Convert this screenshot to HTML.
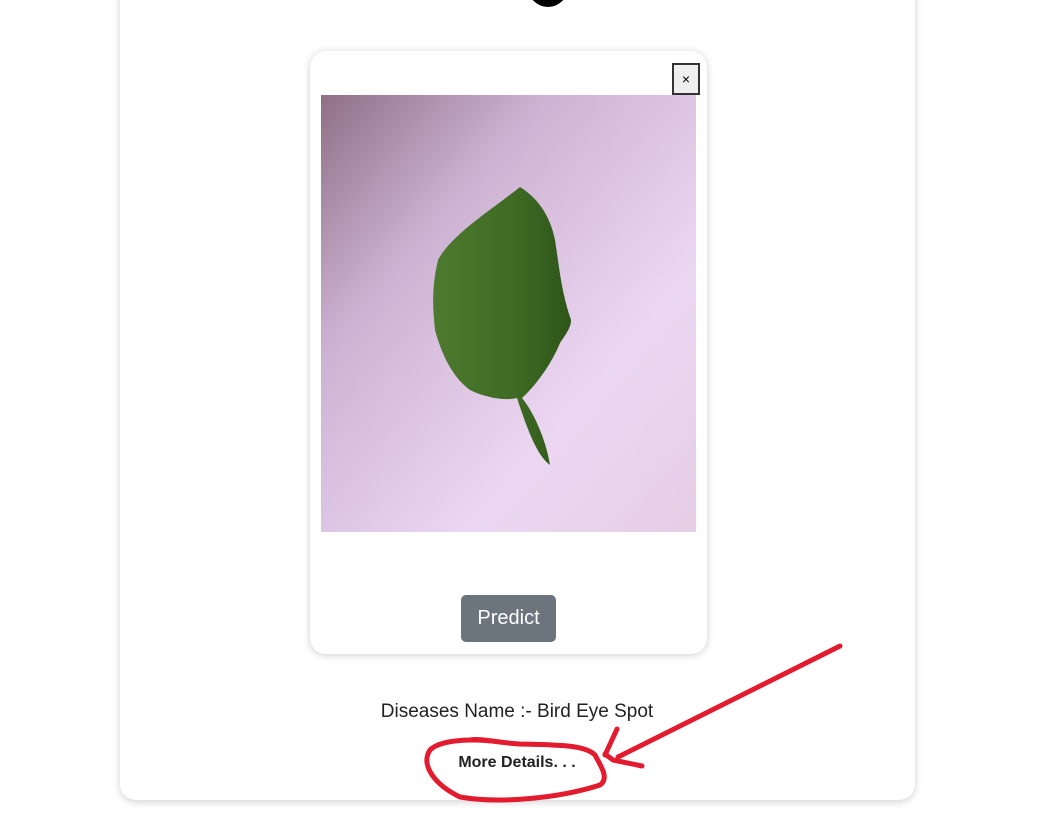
<!DOCTYPE html>
<html><head><style>
body{margin:0;width:1047px;height:817px;background:#fff;position:relative;overflow:hidden;font-family:"Liberation Sans",sans-serif}
.outer{position:absolute;left:120px;top:-40px;width:795px;height:840px;background:#fff;border-radius:16px;box-shadow:0 2px 8px rgba(0,0,0,.18)}
.dot{position:absolute;left:528px;top:-33px;width:40px;height:40px;border-radius:50%;background:#000}
.inner{position:absolute;left:310px;top:51px;width:397px;height:603px;background:#fff;border-radius:16px;box-shadow:0 1px 8px rgba(0,0,0,.2)}
.close{position:absolute;left:672px;top:63px;width:24px;height:28px;border:2px solid #333;background:#efefef;font-size:14px;text-align:center;line-height:28px}
.btn{position:absolute;left:461px;top:595px;width:95px;height:47px;background:#6c757d;border-radius:5px;color:#fff;font-size:20px;text-align:center;line-height:47px}
.t1{position:absolute;left:0;width:1034px;top:701px;text-align:center;font-size:19px;color:#222}
.t2{position:absolute;left:0;width:1034px;top:754px;text-align:center;font-size:16px;font-weight:bold;color:#222}
</style></head><body>
<div class="outer"></div>
<div class="dot"></div>
<div class="inner"></div>
<div class="close">×</div>
<svg style="position:absolute;left:321px;top:95px" width="375" height="437">
<defs><linearGradient id="g" x1="0" y1="0" x2="1" y2="1"><stop offset="0" stop-color="#8e6f86"/><stop offset=".3" stop-color="#cdb3d3"/><stop offset=".7" stop-color="#ecd7f2"/><stop offset="1" stop-color="#e6cde6"/></linearGradient>
<linearGradient id="l" x1="0" y1="0" x2="1" y2="0"><stop offset="0" stop-color="#4d7a2e"/><stop offset=".6" stop-color="#3e6a24"/><stop offset="1" stop-color="#2e5518"/></linearGradient></defs>
<rect width="375" height="437" fill="url(#g)"/>
<path d="M199 92 C170 115 130 140 117 165 C110 195 112 215 114 235 C122 265 135 285 149 295 C165 303 185 306 196 303 C205 330 215 360 229 370 C226 350 215 320 201 303 C215 290 230 270 239 248 C248 235 252 228 249 222 C240 195 238 170 234 145 C230 125 220 105 199 92Z" fill="url(#l)"/>
</svg>
<div class="btn">Predict</div>
<div class="t1">Diseases Name :- Bird Eye Spot</div>
<div class="t2">More Details. . .</div>
<svg style="position:absolute;left:0;top:0" width="1047" height="817" fill="none" stroke="#e31b2e" stroke-width="5" stroke-linecap="round" stroke-linejoin="round">
<path d="M840 646 L618 757 M605 754 L613 760 L642 766"/>
<path d="M605 755 L617 729 M500 742 C470 738 440 740 430 750 C420 765 435 785 460 797 C500 804 560 798 600 785 C610 778 600 765 595 755 C585 745 560 745 520 744 C500 743 480 738 470 740"/>
</svg>
</body></html>
